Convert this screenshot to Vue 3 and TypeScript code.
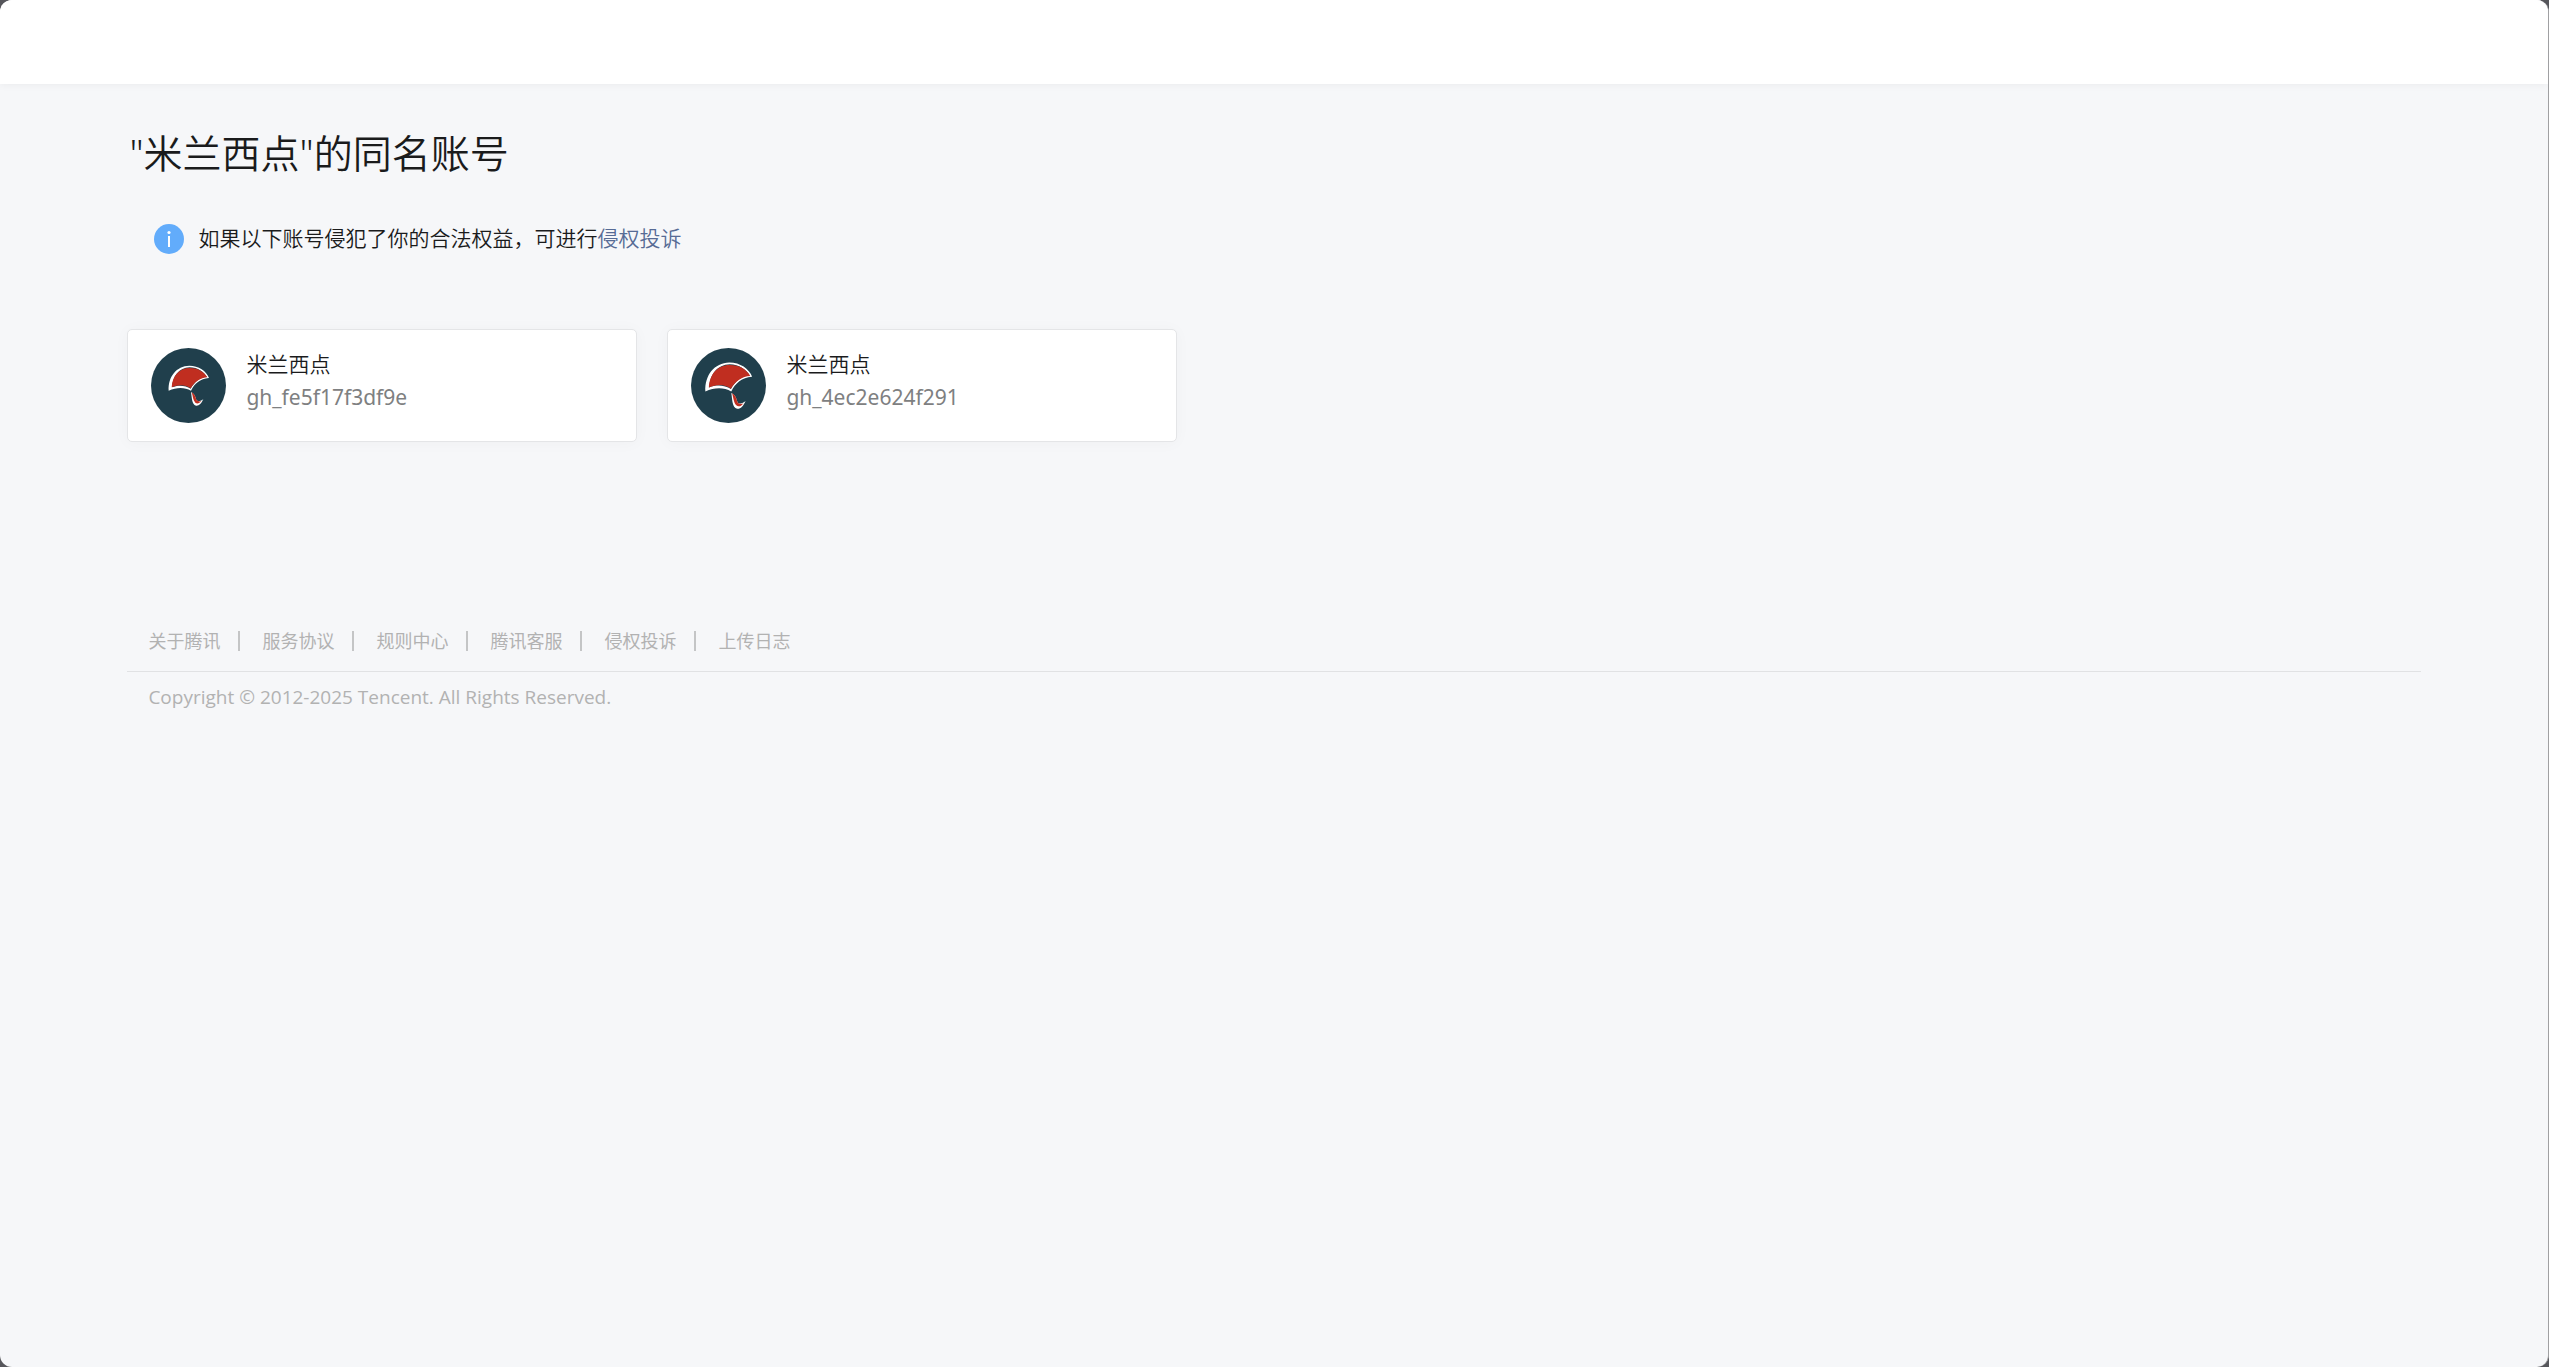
<script setup lang="ts">
interface Account {
  name: string
  id: string
  scale: number
}

const accounts: Account[] = [
  { name: '米兰西点', id: 'gh_fe5f17f3df9e', scale: 1 },
  { name: '米兰西点', id: 'gh_4ec2e624f291', scale: 1.16 },
]

const footerLinks: string[] = ['关于腾讯', '服务协议', '规则中心', '腾讯客服', '侵权投诉', '上传日志']
</script>

<template>
  <div class="window">
    <header class="topbar"></header>
    <main class="content">
      <h1 class="title">"米兰西点"的同名账号</h1>
      <p class="notice">
        <svg class="notice-icon" viewBox="0 0 30 30" aria-hidden="true">
          <circle cx="15" cy="15" r="15" fill="#62acfb" />
          <circle cx="15" cy="8.5" r="1.6" fill="#fff" />
          <rect x="14" y="12" width="2" height="11" fill="#fff" />
        </svg>
        <span>如果以下账号侵犯了你的合法权益，可进行<a href="#" class="notice-link">侵权投诉</a></span>
      </p>
      <ul class="cards">
        <li v-for="account in accounts" :key="account.id" class="card">
          <svg class="avatar" viewBox="0 0 225 225" aria-hidden="true">
            <circle cx="112.5" cy="112.5" r="112.5" fill="#203f4c" />
            <g :transform="`translate(115 114) scale(${account.scale}) translate(-115 -114)`">
              <path d="M53 128C51 86 76 54 115 53C143 53 166 69 174 90L169 89C159 71 140 58 116 58C84 59 65 84 63 118C82 109 105 113 119 122C130 102 148 86 169 87L173 90C148 92 130 107 120 128C101 117 77 117 53 128Z" fill="#fff" />
              <path d="M62 118C64 84 84 60 116 60C140 60 158 70 169 88C148 89 130 102 119 121C103 109 82 109 62 118Z" fill="#c02e20" />
              <path d="M120 132C134 139 133 150 137 157C143 162 150 159 157 153C151 167 144 174 135 173C122 169 123 150 120 132Z" fill="#fff" />
              <path d="M122 133C134 140 133 150 137 157C142 161 147 161 151 159C145 167 138 168 133 164C126 157 126 146 122 133Z" fill="#c02e20" />
            </g>
          </svg>
          <div class="card-text">
            <strong class="card-name">{{ account.name }}</strong>
            <span class="card-id">{{ account.id }}</span>
          </div>
        </li>
      </ul>
      <footer class="footer">
        <nav class="footer-nav">
          <a v-for="link in footerLinks" :key="link" href="#" class="footer-link">{{ link }}</a>
        </nav>
        <p class="copyright">Copyright © 2012-2025 Tencent. All Rights Reserved.</p>
      </footer>
    </main>
  </div>
</template>

<style>
html {
  background: #56565b;
}

body {
  margin: 0;
}
</style>

<style scoped>
.window {
  box-sizing: border-box;
  min-height: 100vh;
  overflow: hidden;
  border-right: 1px solid #a0a0a2;
  border-radius: 12px;
  background: #f6f7f9;
  color: #1a1b1c;
  font-family: "Noto Sans", "Noto Sans CJK SC", sans-serif;
  font-size: 21px;
  font-weight: 350;
  line-height: 33px;
}

.topbar {
  height: 84px;
  background: #fff;
  box-shadow: 0 1px 8px rgba(0, 0, 0, 0.05);
}

.content {
  padding: 38px 5% 0;
}

.title {
  margin: 0;
  padding-left: 2px;
  font-size: 39px;
  font-weight: 350;
  line-height: 62px;
}

.notice {
  display: flex;
  align-items: center;
  gap: 14px;
  margin: 38px 0 0;
  padding-left: 27px;
}

.notice-icon {
  width: 30px;
  height: 30px;
}

.notice-link {
  color: #576b95;
  text-decoration: none;
}

.cards {
  display: grid;
  grid-template-columns: repeat(auto-fill, minmax(500px, 510px));
  gap: 30px;
  margin: 74px 0 0;
  padding: 0;
  list-style: none;
}

.card {
  display: flex;
  box-sizing: border-box;
  gap: 20px;
  padding: 18px 23px;
  border: 1px solid #e4e5e7;
  border-radius: 5px;
  background: #fff;
  box-shadow: 0 1px 16px rgba(0, 0, 0, 0.03);
}

.avatar {
  flex: none;
  width: 75px;
  height: 75px;
}

.card-text {
  display: flex;
  flex-direction: column;
}

.card-name {
  font-weight: 350;
}

.card-id {
  color: #7e8081;
  font-weight: 400;
}

.footer {
  margin-top: 180px;
  color: #b2b2b2;
  font-size: 18px;
  font-weight: 400;
  line-height: 28px;
}

.footer-nav {
  display: flex;
  align-items: center;
  padding: 5px 21px 16px;
  border-bottom: 1px solid #e1e2e4;
}

.footer-link {
  display: flex;
  align-items: center;
  color: inherit;
  text-decoration: none;
}

.footer-link:not(:last-child)::after {
  width: 2px;
  height: 20px;
  margin: 0 22px 0 18px;
  background: #c4c5c6;
  content: "";
}

.copyright {
  margin: 0;
  padding: 11px 21px;
  font-family: "Open Sans", sans-serif;
  font-size: 19px;
}
</style>
